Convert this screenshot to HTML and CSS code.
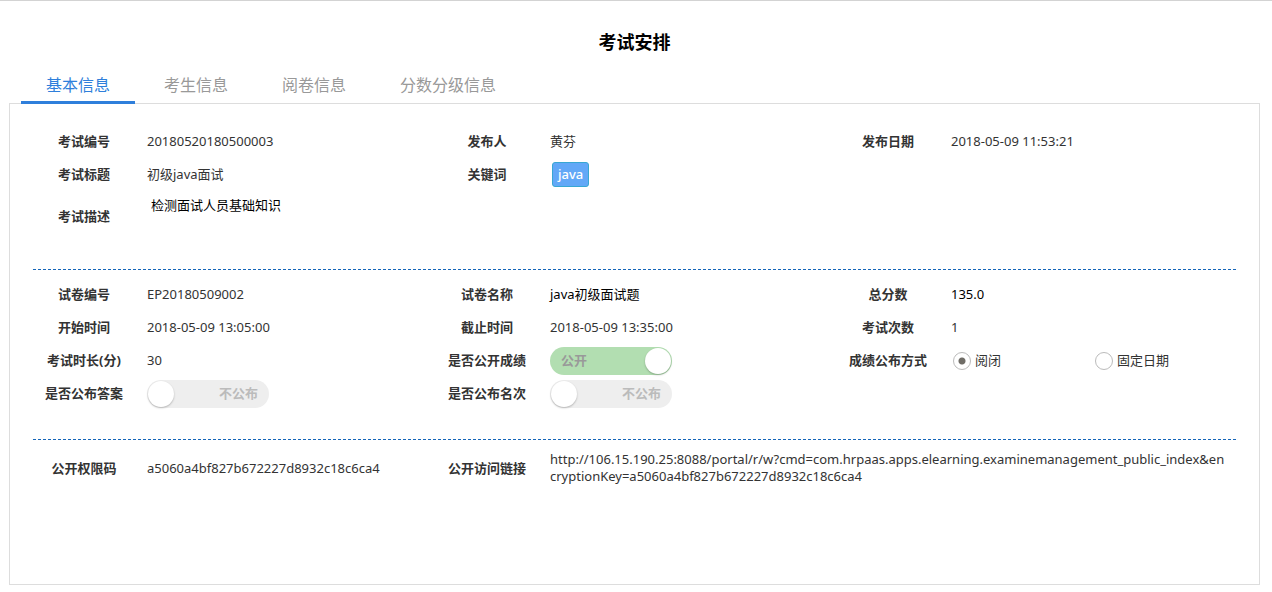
FILE: index.html
```html
<!DOCTYPE html>
<html lang="zh-CN">
<head>
  <meta charset="UTF-8">
  <title>考试安排</title>
  <meta name="viewport" content="width=device-width, initial-scale=1.0">
  <link rel="stylesheet" href="styles.css">
</head>
<body>
  <h1>考试安排</h1>

  <nav class="tabs">
    <button type="button" class="active">基本信息</button>
    <button type="button">考生信息</button>
    <button type="button">阅卷信息</button>
    <button type="button">分数分级信息</button>
  </nav>

  <main class="panel">
    <dl class="info">
      <dt>考试编号</dt>
      <dd>20180520180500003</dd>
      <dt>发布人</dt>
      <dd>黄芬</dd>
      <dt>发布日期</dt>
      <dd>2018-05-09 11:53:21</dd>

      <dt>考试标题</dt>
      <dd>初级java面试</dd>
      <dt>关键词</dt>
      <dd class="wide"><span class="tag">java</span></dd>

      <dt><label for="desc">考试描述</label></dt>
      <dd class="full"><textarea id="desc" readonly>检测面试人员基础知识</textarea></dd>
    </dl>

    <dl class="info exam">
      <dt>试卷编号</dt>
      <dd>EP20180509002</dd>
      <dt>试卷名称</dt>
      <dd class="dark">java初级面试题</dd>
      <dt>总分数</dt>
      <dd class="dark">135.0</dd>

      <dt>开始时间</dt>
      <dd>2018-05-09 13:05:00</dd>
      <dt>截止时间</dt>
      <dd>2018-05-09 13:35:00</dd>
      <dt>考试次数</dt>
      <dd>1</dd>

      <dt>考试时长(分)</dt>
      <dd>30</dd>
      <dt>是否公开成绩</dt>
      <dd>
        <label class="switch on"><span>公开</span><input type="checkbox" aria-label="是否公开成绩" checked></label>
      </dd>
      <dt>成绩公布方式</dt>
      <dd class="radios">
        <label><input type="radio" name="publish" checked>阅闭</label>
        <label><input type="radio" name="publish">固定日期</label>
      </dd>

      <dt>是否公布答案</dt>
      <dd>
        <label class="switch"><input type="checkbox" aria-label="是否公布答案"><span>不公布</span></label>
      </dd>
      <dt>是否公布名次</dt>
      <dd class="wide">
        <label class="switch"><input type="checkbox" aria-label="是否公布名次"><span>不公布</span></label>
      </dd>
    </dl>

    <dl class="info access">
      <dt>公开权限码</dt>
      <dd>a5060a4bf827b672227d8932c18c6ca4</dd>
      <dt>公开访问链接</dt>
      <dd class="wide"><a href="http://106.15.190.25:8088/portal/r/w?cmd=com.hrpaas.apps.elearning.examinemanagement_public_index&amp;encryptionKey=a5060a4bf827b672227d8932c18c6ca4">http://106.15.190.25:8088/portal/r/w?cmd=com.hrpaas.apps.elearning.examinemanagement_public_index&amp;en<br>cryptionKey=a5060a4bf827b672227d8932c18c6ca4</a></dd>
    </dl>
  </main>
</body>
</html>
```
FILE: styles.css
```css
* { box-sizing: border-box; }
body {
  margin: 0;
  min-height: 100vh;
  display: flex;
  flex-direction: column;
  padding: 0 12px 7px 9px;
  border-top: 1px solid #d3d3d3;
  background: #fff;
  color: #333;
  font-family: "Noto Sans", "Noto Sans CJK SC", sans-serif;
  font-size: 13px;
  line-height: 17px;
}
h1 {
  margin: 28px 0 12px;
  color: #000;
  font-size: 18px;
  line-height: 26px;
  text-align: center;
}
.tabs {
  display: flex;
  gap: 4px;
  padding: 0 12px;
  /* the active underline covers the panel border */
  margin-bottom: -1px;
  position: relative;
}
.tabs button {
  padding: 2px 25px 0;
  border: 0;
  border-bottom: 3px solid transparent;
  background: none;
  color: #999;
  font-family: inherit;
  font-size: 16px;
  line-height: 32px;
  cursor: pointer;
}
.tabs button.active {
  border-color: #2f7fdb;
  color: #2f7fdb;
}
.panel {
  flex: 1;
  padding: 21px 23px;
  border: 1px solid #ddd;
}

/* label / value pairs, three per row */
.info {
  display: grid;
  grid-template-columns: 102px 301fr 102px 299fr 102px 297fr;
  grid-auto-rows: minmax(33px, auto);
  align-items: center;
  margin: 0;
}
.info dt {
  font-weight: bold;
  text-align: center;
  white-space: nowrap;
}
.info dd {
  min-width: 0;
  margin: 0;
  padding-left: 12px;
  overflow-wrap: anywhere;
}
.info .wide { grid-column: span 3; }
.info .full { grid-column: span 5; }
.info .dark { color: #000; }
.exam {
  margin-top: 28px;
  padding: 8px 0 29px;
  border-top: 1px dashed #1565b8;
}
.access {
  padding-top: 11px;
  border-top: 1px dashed #1565b8;
}
.info a {
  color: inherit;
  text-decoration: none;
  word-break: break-all;
}
.info textarea {
  display: block;
  width: 100%;
  height: 50px;
  padding: 6px 4px;
  border: 0;
  background: none;
  color: #000;
  font: inherit;
  resize: none;
}
.tag {
  display: inline-block;
  margin-left: 2px;
  padding: 3px 5px;
  border: 1px solid #38a7d3;
  border-radius: 3px;
  background: #62a8f7;
  color: #fff;
  font-weight: 500;
}

.switch {
  display: flex;
  align-items: center;
  justify-content: space-between;
  width: 122px;
  height: 28px;
  padding: 1px;
  border-radius: 14px;
  background: #eee;
  color: #bbb;
  font-weight: bold;
}
.switch.on {
  background: #b2deb1;
  color: #999;
}
.switch span { padding: 0 10px; }
.switch input {
  appearance: none;
  width: 26px;
  height: 26px;
  margin: 0;
  border-radius: 50%;
  background: #fff;
  box-shadow: 0 1px 2px rgba(0, 0, 0, 0.25);
}

.radios { display: flex; }
.radios label {
  display: flex;
  flex: 0 0 142px;
  align-items: center;
  gap: 4px;
}
.radios input {
  appearance: none;
  width: 18px;
  height: 18px;
  margin: 0 0 0 2px;
  border: 1px solid #bbb;
  border-radius: 50%;
  background: #fff;
}
.radios input:checked {
  background: radial-gradient(circle, #6f6c66 3px, #fff 4px);
}
```
